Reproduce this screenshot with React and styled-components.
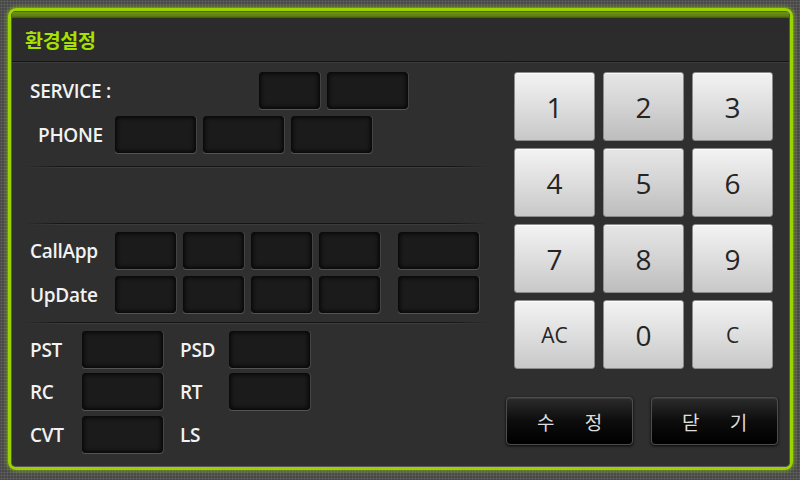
import React from "react";
import styled, { createGlobalStyle } from "styled-components";

const GlobalStyle = createGlobalStyle`
  html, body {
    margin: 0;
    padding: 0;
    background-color: #474747;
    background-image: radial-gradient(circle, #626262 0.8px, transparent 1.2px);
    background-size: 3px 3px;
  }
  * {
    box-sizing: border-box;
  }
`;

const LATIN = `"Open Sans", "Noto Sans CJK KR", sans-serif`;
const KOREAN = `"Noto Sans CJK KR", "Noto Sans", sans-serif`;

const Screen = styled.div`
  width: 800px;
  height: 480px;
  padding: 8px 7px 10px 8px;
`;

const Frame = styled.div`
  width: 785px;
  height: 462px;
  border: 3px solid #9bd300;
  border-radius: 8px;
  box-shadow: 0 0 4px 1px rgba(165, 225, 0, 0.55),
    inset 0 0 2px rgba(120, 170, 0, 0.8);
  overflow: hidden;
`;

const Panel = styled.div`
  height: 100%;
  border: 1px solid #575757;
  border-radius: 4px;
  background: #2f2f2f;
  display: flex;
  flex-direction: column;
`;

const Header = styled.div`
  height: 50px;
  flex: none;
  display: flex;
  align-items: center;
  padding: 6px 0 0 13px;
  background: linear-gradient(
    #6f9214 0,
    #5f8010 4px,
    #3f560a 6px,
    #2b2b2b 6px,
    #2c2c2c 100%
  );
  border-bottom: 1px solid #141414;
  box-shadow: 0 1px 0 #3d3d3d;
`;

const Title = styled.h1`
  margin: 0;
  font-family: ${KOREAN};
  font-weight: 700;
  font-size: 19.5px;
  color: #a6e200;
  letter-spacing: -0.3px;
`;

const Body = styled.div`
  flex: 1;
  display: flex;
`;

const LeftColumn = styled.div`
  width: 488px;
  padding: 10px 0 0 18px;
  display: flex;
  flex-direction: column;
`;

const Row = styled.div`
  display: flex;
  align-items: center;
  gap: ${(p) => p.$gap ?? 7}px;
  height: 37px;
  margin-top: ${(p) => p.$top ?? 0}px;
  padding-left: ${(p) => p.$indent ?? 0}px;
`;

const Label = styled.span`
  width: ${(p) => p.$w}px;
  flex: none;
  font-family: ${LATIN};
  font-weight: 600;
  font-size: 19px;
  letter-spacing: -0.3px;
  color: #f2f2f2;
  margin-right: ${(p) => p.$after ?? -7}px;
  margin-left: ${(p) => p.$before ?? 0}px;
`;

const Field = styled.div`
  width: ${(p) => p.$w ?? 61}px;
  height: 37px;
  flex: none;
  margin-left: ${(p) => p.$left ?? 0}px;
  background: #1b1b1b;
  border: 1px solid #0b0b0b;
  border-radius: 3px;
  box-shadow: 0 1px 0 #545454, 1px 0 0 #444, inset 0 0 5px #000;
`;

const Divider = styled.div`
  height: 2px;
  width: 462px;
  margin: ${(p) => p.$top}px 0 0 -5px;
  background: linear-gradient(
      to right,
      transparent,
      #141414 8%,
      #141414 92%,
      transparent
    )
    top / 100% 1px no-repeat,
    linear-gradient(to right, transparent, #3c3c3c 8%, #3c3c3c 92%, transparent)
    bottom / 100% 1px no-repeat;
`;

const RightColumn = styled.div`
  flex: 1;
  padding: 10px 0 0 14px;
  display: flex;
  flex-direction: column;
`;

const Keypad = styled.div`
  display: grid;
  grid-template-columns: repeat(3, 81px);
  grid-auto-rows: 69px;
  column-gap: 8px;
  row-gap: 7px;
`;

const Key = styled.button`
  margin: 0;
  padding: 0;
  border: 1px solid #8c8c8c;
  border-radius: 3px;
  background: ${(p) =>
    p.$dim
      ? "linear-gradient(#e6e6e6, #d3d3d3 50%, #bdbdbd)"
      : "linear-gradient(#f3f3f3, #dedede 50%, #c8c8c8)"};
  box-shadow: inset 0 1px 0 rgba(255, 255, 255, 0.7);
  font-family: ${LATIN};
  font-weight: 500;
  font-size: ${(p) => (p.$small ? 21 : 28)}px;
  color: #252525;
  display: flex;
  align-items: center;
  justify-content: center;
  cursor: pointer;
`;

const Actions = styled.div`
  display: flex;
  gap: 18px;
  margin: 28px 0 0 -8px;
`;

const ActionButton = styled.button`
  width: 127px;
  height: 48px;
  margin: 0;
  padding: 0;
  border: 1px solid #4d4d4d;
  border-radius: 4px;
  background: linear-gradient(#2c2c2c, #0c0c0c 50%, #000);
  box-shadow: 0 1px 3px rgba(0, 0, 0, 0.9), inset 0 1px 0 #3a3a3a;
  font-family: ${KOREAN};
  font-size: 19px;
  color: #dedede;
  word-spacing: 26px;
  cursor: pointer;
`;

const keys = [
  { t: "1" }, { t: "2", dim: true }, { t: "3" },
  { t: "4" }, { t: "5", dim: true }, { t: "6" },
  { t: "7" }, { t: "8", dim: true }, { t: "9" },
  { t: "AC", small: true }, { t: "0" }, { t: "C", small: true },
];

const App = () => {
  return (
    <>
      <GlobalStyle />
      <Screen>
        <Frame>
          <Panel>
            <Header>
              <Title>환경설정</Title>
            </Header>
            <Body>
              <LeftColumn>
                <Row>
                  <Label $w={229}>SERVICE :</Label>
                  <Field $w={61} />
                  <Field $w={81} />
                </Row>
                <Row $top={7} $indent={8}>
                  <Label $w={77}>PHONE</Label>
                  <Field $w={81} />
                  <Field $w={81} />
                  <Field $w={81} />
                </Row>
                <Divider $top={13} />
                <Divider $top={55} />
                <Row $top={7}>
                  <Label $w={85}>CallApp</Label>
                  <Field />
                  <Field />
                  <Field />
                  <Field />
                  <Field $w={81} $left={11} />
                </Row>
                <Row $top={7}>
                  <Label $w={85}>UpDate</Label>
                  <Field />
                  <Field />
                  <Field />
                  <Field />
                  <Field $w={81} $left={11} />
                </Row>
                <Divider $top={9} />
                <Row $top={7} $gap={0}>
                  <Label $w={52} $after={0}>PST</Label>
                  <Field $w={81} />
                  <Label $w={49} $after={0} $before={17}>PSD</Label>
                  <Field $w={81} />
                </Row>
                <Row $top={5} $gap={0}>
                  <Label $w={52} $after={0}>RC</Label>
                  <Field $w={81} />
                  <Label $w={49} $after={0} $before={17}>RT</Label>
                  <Field $w={81} />
                </Row>
                <Row $top={6} $gap={0}>
                  <Label $w={52} $after={0}>CVT</Label>
                  <Field $w={81} />
                  <Label $w={49} $after={0} $before={17}>LS</Label>
                </Row>
              </LeftColumn>
              <RightColumn>
                <Keypad>
                  {keys.map((k) => (
                    <Key key={k.t} $dim={k.dim} $small={k.small}>
                      {k.t}
                    </Key>
                  ))}
                </Keypad>
                <Actions>
                  <ActionButton>수 정</ActionButton>
                  <ActionButton>닫 기</ActionButton>
                </Actions>
              </RightColumn>
            </Body>
          </Panel>
        </Frame>
      </Screen>
    </>
  );
};

export default App;
